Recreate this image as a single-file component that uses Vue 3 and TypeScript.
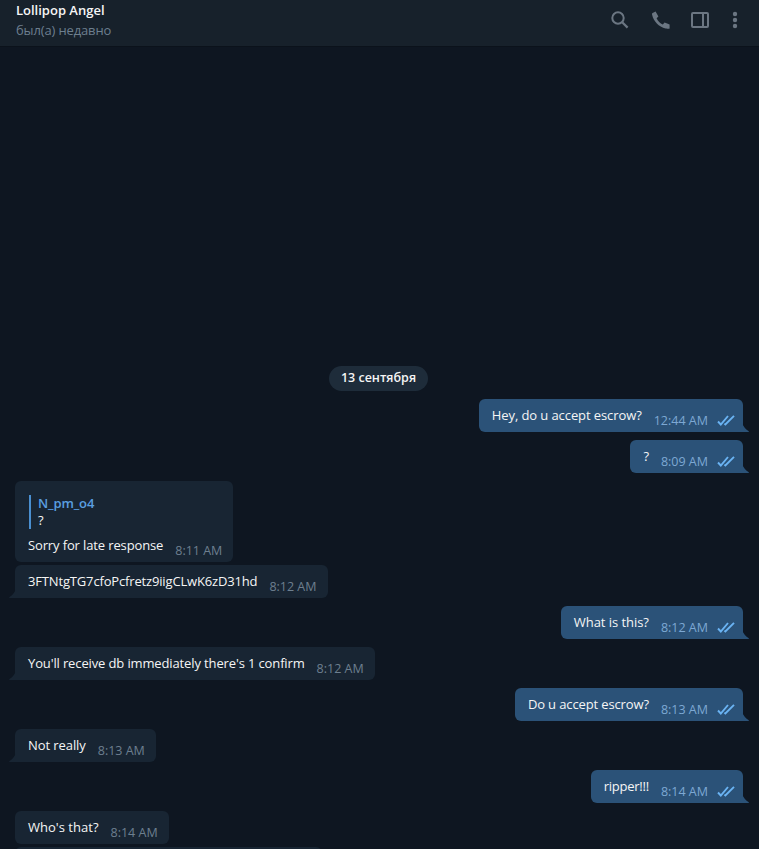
<template>
  <div class="window">
    <header class="top-bar">
      <div class="peer">
        <div class="peer-name">Lollipop Angel</div>
        <div class="peer-status">был(а) недавно</div>
      </div>
      <div class="actions">
        <svg class="icon search" viewBox="0 0 20 20" width="20" height="20">
          <circle cx="8" cy="8" r="5.7" fill="none" stroke="currentColor" stroke-width="2" />
          <path d="M12.2 12.2 L17.6 17.6" fill="none" stroke="currentColor" stroke-width="2.2" />
        </svg>
        <svg class="icon phone" viewBox="0 0 20 20" width="20" height="20">
          <path
            d="M4.6 1.6 L1.6 3 C1 3.4 .9 4 1.1 4.8 C2.6 11.4 7.8 16.8 14.6 18.6 C15.6 18.8 18 18.8 18.6 18.4 L18.6 14.6 L13.6 12.6 L11.8 14.6 C9.2 13.4 6.8 10.8 5.6 8.2 L7.4 6.4 Z"
            fill="currentColor"
          />
        </svg>
        <svg class="icon panel" viewBox="0 0 20 20" width="20" height="20">
          <rect x="2" y="3" width="16" height="14" fill="none" stroke="currentColor" stroke-width="2" rx="1" />
          <path d="M13 3 V17" stroke="currentColor" stroke-width="2" />
        </svg>
        <svg class="icon dots" viewBox="0 0 6 20" width="6" height="20">
          <circle cx="3" cy="4" r="2.2" fill="currentColor" />
          <circle cx="3" cy="10" r="2.2" fill="currentColor" />
          <circle cx="3" cy="16" r="2.2" fill="currentColor" />
        </svg>
      </div>
    </header>

    <main class="history">
      <div class="date-pill">13 сентября</div>
      <div
        v-for="msg in messages"
        :key="msg.id"
        class="row"
        :class="[msg.out ? 'out' : 'in', { joined: msg.joined }]"
      >
        <div class="bubble" :class="{ 'has-tail': msg.tail }">
          <div v-if="msg.reply" class="reply">
            <div class="reply-name">{{ msg.reply.name }}</div>
            <div class="reply-text">{{ msg.reply.text }}</div>
          </div>
          <div class="line">
            <span class="text" :style="{ letterSpacing: `${msg.tracking ?? -0.13}px` }">{{ msg.text }}</span>
            <span class="time">{{ msg.time }}</span>
            <svg v-if="msg.out" class="checks" viewBox="0 0 18 12" width="18" height="12">
              <path d="M1 7.5 L3.8 10.5 L11 2" fill="none" stroke="currentColor" stroke-width="1.9" />
              <path d="M7.4 9.6 L8.4 10.5 L17 1.8" fill="none" stroke="currentColor" stroke-width="1.9" />
            </svg>
          </div>
          <svg v-if="msg.tail" class="tail" viewBox="0 0 7 9" width="7" height="9">
            <path d="M7 0 V9 H0.6 C0 9 0 8.4 .5 8 C3 6.6 5.4 4 7 0 Z" fill="currentColor" />
          </svg>
        </div>
      </div>
      <!-- next message, only its top edge is inside the window -->
      <div class="cut-bubble"></div>
    </main>
  </div>
</template>

<script setup lang="ts">
interface Message {
  id: number
  out: boolean
  text: string
  time: string
  tail?: boolean
  joined?: boolean
  tracking?: number
  reply?: { name: string; text: string }
}

const messages: Message[] = [
  { id: 1, out: true, text: 'Hey, do u accept escrow?', time: '12:44 AM', tail: true, tracking: -0.09 },
  { id: 2, out: true, text: '?', time: '8:09 AM', tail: true },
  { id: 3, out: false, text: 'Sorry for late response', time: '8:11 AM', reply: { name: 'N_pm_o4', text: '?' } },
  { id: 4, out: false, text: '3FTNtgTG7cfoPcfretz9iigCLwK6zD31hd', time: '8:12 AM', tail: true, joined: true, tracking: -0.16 },
  { id: 5, out: true, text: 'What is this?', time: '8:12 AM', tail: true, tracking: -0.05 },
  { id: 6, out: false, text: "You'll receive db immediately there's 1 confirm", time: '8:12 AM', tail: true },
  { id: 7, out: true, text: 'Do u accept escrow?', time: '8:13 AM', tail: true },
  { id: 8, out: false, text: 'Not really', time: '8:13 AM', tail: true, tracking: -0.08 },
  { id: 9, out: true, text: 'ripper!!!', time: '8:14 AM', tail: true, tracking: -0.25 },
  { id: 10, out: false, text: "Who's that?", time: '8:14 AM', tracking: 0.02 }
]
</script>

<style>
html,
body {
  background: #0e1621;
}
</style>

<style scoped>
.window {
  height: 849px;
  overflow: hidden;
  display: flex;
  flex-direction: column;
  background: #0e1621;
  font-family: "Open Sans", "Noto Sans", sans-serif;
  font-size: 13px;
  color: #f5f5f5;
}
.top-bar {
  flex: none;
  height: 46px;
  display: flex;
  justify-content: space-between;
  background: #17212b;
  border-bottom: 1px solid #0b121b;
  padding: 0 21px 0 16px;
}
.peer {
  line-height: 20px;
}
.peer-name {
  font-weight: 600;
  color: #f5f5f5;
}
.peer-status {
  color: #6d7f8f;
  letter-spacing: -0.14px;
}
.actions {
  display: flex;
  align-items: center;
  color: #6b7682;
  padding-bottom: 6px;
}
.icon {
  display: block;
}
.phone {
  margin-left: 21px;
}
.panel {
  margin-left: 19px;
}
.dots {
  margin-left: 22px;
}
.history {
  flex: 1;
  padding: 319px 16px 0 15px;
  display: flex;
  flex-direction: column;
}
.date-pill {
  align-self: center;
  height: 25px;
  line-height: 24px;
  padding: 0 12px;
  border-radius: 13px;
  background: #1e2c3a;
  font-weight: 600;
  font-size: 12.5px;
  margin-bottom: 8px;
  margin-left: -1px;
}
.row {
  flex: none;
  display: flex;
  margin-bottom: 8px;
}
.row.out {
  justify-content: flex-end;
}
.row.joined {
  margin-top: -5px;
}
.bubble {
  position: relative;
  padding: 7px 11px 6px 13px;
  border-radius: 6px;
  line-height: 20px;
}
.in .bubble {
  background: #182533;
  color: #f5f5f5;
}
.out .bubble {
  background: #2b5278;
  padding-right: 8px;
}
.line {
  display: flex;
  align-items: flex-start;
  height: 20px;
}
.text {
  margin-top: -1px;
  white-space: nowrap;
}
.time {
  margin-left: 12px;
  margin-top: 6px;
  font-size: 12.5px;
  line-height: 18px;
  white-space: nowrap;
}
.in .time {
  color: #6d7f8f;
}
.out .time {
  color: #7da8d3;
}
.checks {
  margin: 8px 0 0 9px;
  color: #6ab3f3;
}
.out .has-tail {
  border-bottom-right-radius: 0;
}
.in .has-tail {
  border-bottom-left-radius: 0;
}
.tail {
  position: absolute;
  bottom: 0;
}
.out .tail {
  right: -6px;
  color: #2b5278;
  transform: scaleX(-1);
}
.in .tail {
  left: -6px;
  color: #182533;
}
.reply {
  border-left: 2px solid #4a8fd0;
  padding-left: 7px;
  margin: 7px 0 7px 1px;
  line-height: 17px;
}
.reply-name {
  font-weight: 600;
  color: #5a9fe0;
  letter-spacing: -0.13px;
}
.reply-text {
  color: #f5f5f5;
}
.cut-bubble {
  flex: none;
  width: 307px;
  height: 33px;
  margin-top: -5px;
  border-radius: 6px;
  background: #182533;
}
</style>
